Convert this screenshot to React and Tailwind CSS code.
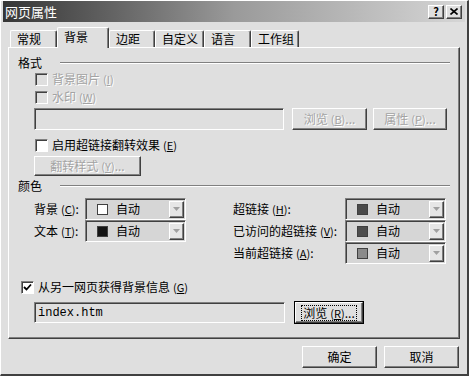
import React from "react";

const raised =
  "border border-t-white border-l-white border-r-[#404040] border-b-[#404040] shadow-[inset_-1px_-1px_0_#808080]";
const sunken =
  "border border-t-[#808080] border-l-[#808080] border-r-white border-b-white shadow-[inset_1px_1px_0_#404040]";
const dim = "text-[#a3a3a3] [text-shadow:1px_1px_0_#fff]";

const Key = ({ k }) => (
  <span className="ml-[3px] text-[11px]">
    (<u>{k}</u>)
  </span>
);

const Checkbox = ({ checked, disabled }) => (
  <div
    className={`w-[13px] h-[13px] flex items-center justify-center ${sunken} ${
      disabled ? "bg-[#dfdfdf]" : "bg-white"
    }`}
  >
    {checked && (
      <svg width="9" height="9" viewBox="0 0 9 9">
        <path d="M1 4 L3.5 6.5 L8 1.5" stroke="#000" strokeWidth="1.8" fill="none" />
      </svg>
    )}
  </div>
);

const CheckRow = ({ label, k, checked, disabled, className = "" }) => (
  <div className={`h-[18px] flex items-center gap-[4px] ${className}`}>
    <Checkbox checked={checked} disabled={disabled} />
    <span className={disabled ? dim : ""}>
      {label}
      <Key k={k} />
    </span>
  </div>
);

const Header = ({ text, className = "" }) => (
  <div className={`h-[14px] flex items-center ${className}`}>
    <span className="leading-[14px]">{text}</span>
    <div className="flex-1 ml-[18px] border-t border-t-[#808080] border-b border-b-white" />
  </div>
);

const Button = ({ children, w, disabled, focused, className = "" }) => (
  <div
    className={`${w} flex items-center justify-center ${
      focused ? "outline outline-1 outline-black" : ""
    } ${raised} ${disabled ? dim : ""} ${className}`}
  >
    <span className={focused ? "outline outline-1 outline-dotted outline-black px-[1px]" : ""}>
      {children}
    </span>
  </div>
);

const Dropdown = ({ swatch }) => (
  <div className={`w-[101px] h-[22px] flex items-center bg-[#d6d6d6] ${sunken} p-[1px]`}>
    <div className={`ml-[10px] w-[11px] h-[11px] border border-[#404040] ${swatch}`} />
    <span className="ml-[8px]">自动</span>
    <div className={`ml-auto w-[15px] h-[17px] bg-[#e6e6e6] flex items-center justify-center ${raised}`}>
      <svg width="7" height="4" viewBox="0 0 7 4">
        <path d="M0 0 H7 L3.5 4 Z" fill="#a0a0a0" />
      </svg>
    </div>
  </div>
);

const Tab = ({ label, w, selected }) => (
  <div
    className={`${w} pl-[6px] flex items-center rounded-t-[2px] border-t border-l border-r border-t-white border-l-white border-r-[#404040] shadow-[inset_-1px_0_0_#808080] bg-[#dfdfdf] ${
      selected ? "h-[21px] -mb-[1px] relative z-10 pb-[3px]" : "h-[17px]"
    }`}
  >
    {label}
  </div>
);

export default function App() {
  return (
    <div className="w-[469px] h-[376px] bg-[#dfdfdf] border-l border-t border-l-white border-t-white border-r-2 border-b-2 border-r-[#404040] border-b-[#404040] flex flex-col overflow-hidden font-['Noto_Sans_CJK_SC','Noto_Sans',sans-serif] text-[12px] leading-[14px] text-black">
      {/* title bar */}
      <div className="h-[21px] mx-[2px] bg-linear-to-r from-[#363636] via-[#9a9a9a] to-[#d6d6d6] flex items-center pl-[2px] pr-[3px]">
        <span className="text-white text-[13px] leading-none">网页属性</span>
        <div className="ml-auto flex gap-[2px]">
          <div className={`w-[16px] h-[14px] bg-[#dfdfdf] flex items-center justify-center font-bold text-[11px] leading-none ${raised}`}>
            ?
          </div>
          <div className={`w-[16px] h-[14px] bg-[#dfdfdf] flex items-center justify-center ${raised}`}>
            <svg width="8" height="7" viewBox="0 0 8 7">
              <path d="M0.5 0.5 L7.5 6.5 M7.5 0.5 L0.5 6.5" stroke="#000" strokeWidth="1.6" />
            </svg>
          </div>
        </div>
      </div>

      {/* tabs */}
      <div className="h-[25px] pl-[9px] flex items-end">
        <Tab label="常规" w="w-[47px]" />
        <Tab label="背景" w="w-[52px]" selected />
        <Tab label="边距" w="w-[46px]" />
        <Tab label="自定义" w="w-[49px]" />
        <Tab label="语言" w="w-[47px]" />
        <Tab label="工作组" w="w-[48px]" />
      </div>

      {/* panel */}
      <div className="mx-[7px] h-[292px] border-l border-t border-l-white border-t-white border-r border-b border-r-[#404040] border-b-[#404040] shadow-[inset_-1px_-1px_0_#808080] flex flex-col px-[9px]">
        <Header text="格式" className="mt-[8px]" />
        <CheckRow label="背景图片" k="I" disabled className="ml-[17px]" />
        <CheckRow label="水印" k="W" disabled className="ml-[17px]" />
        <div className="mt-[2px] ml-[16px] h-[22px] flex items-stretch">
          <div className={`w-[250px] ${sunken}`} />
          <Button w="w-[75px]" disabled className="ml-[8px]">
            浏览<Key k="B" />...
          </Button>
          <Button w="w-[74px]" disabled className="ml-[6px]">
            属性<Key k="P" />...
          </Button>
        </div>
        <CheckRow label="启用超链接翻转效果" k="E" className="ml-[17px] mt-[6px]" />
        <Button w="w-[107px]" disabled className="ml-[16px] mt-[2px] h-[20px]">
          翻转样式<Key k="Y" />...
        </Button>
        <Header text="颜色" className="mt-[3px]" />

        <div className="mt-[5px] flex">
          <div className="ml-[16px] flex flex-col">
            <div className="h-[22px] flex items-center">
              <span className="w-[51px]">背景<Key k="C" />:</span>
              <Dropdown swatch="bg-white" />
            </div>
            <div className="h-[22px] flex items-center">
              <span className="w-[51px]">文本<Key k="T" />:</span>
              <Dropdown swatch="bg-[#141414]" />
            </div>
          </div>
          <div className="ml-[47px] flex flex-col">
            <div className="h-[22px] flex items-center">
              <span className="w-[112px]">超链接<Key k="H" />:</span>
              <Dropdown swatch="bg-[#4a4a4a]" />
            </div>
            <div className="h-[22px] flex items-center">
              <span className="w-[112px]">已访问的超链接<Key k="V" />:</span>
              <Dropdown swatch="bg-[#4e4e4e]" />
            </div>
            <div className="h-[22px] flex items-center">
              <span className="w-[112px]">当前超链接<Key k="A" />:</span>
              <Dropdown swatch="bg-[#8a8a8a]" />
            </div>
          </div>
        </div>

        <CheckRow label="从另一网页获得背景信息" k="G" checked className="ml-[3px] mt-[14px]" />
        <div className="mt-[6px] ml-[16px] h-[21px] flex items-stretch">
          <div className={`w-[251px] flex items-center pl-[3px] font-['Liberation_Mono',monospace] text-[12px] ${sunken}`}>
            index.htm
          </div>
          <Button w="w-[68px]" focused className="ml-[10px]">
            浏览<Key k="R" />...
          </Button>
        </div>
      </div>

      {/* footer */}
      <div className="mt-[7px] pr-[8px] flex justify-end gap-[7px]">
        <Button w="w-[75px]" className="h-[22px] bg-[#dfdfdf]">确定</Button>
        <Button w="w-[75px]" className="h-[22px] bg-[#dfdfdf]">取消</Button>
      </div>
    </div>
  );
}
